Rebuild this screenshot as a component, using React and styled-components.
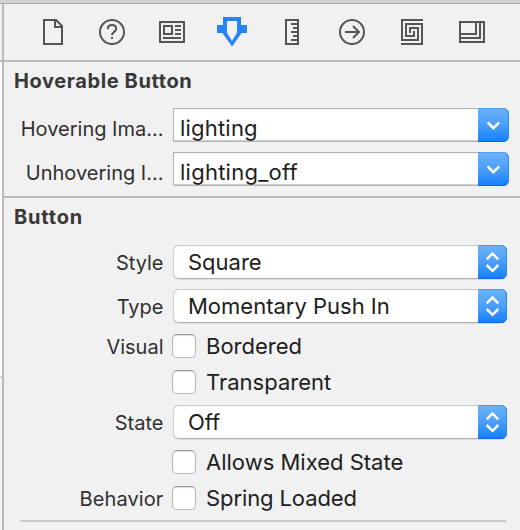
import React from "react";
import styled, { createGlobalStyle } from "styled-components";

const Global = createGlobalStyle`
  * { box-sizing: border-box; }
  body { margin: 0; background: #f1f1f1; font-family: Inter, "Liberation Sans", sans-serif; overflow: hidden; }
`;
const Window = styled.div`
  width: 520px; height: 530px; display: flex; flex-direction: column; background: #f1f1f1;
`;
const TitleEdge = styled.div`
  height: 4px; flex: none; background: #d4d2d5; border-bottom: 1px solid #a8a8aa;
`;
const Body = styled.div`display: flex; flex: 1; min-height: 0;`;
const Canvas = styled.div`width: 2px; display: flex; flex-direction: column;`;
const CanvasPart = styled.div`
  height: ${p => p.$h}px; background: ${p => p.$bg};
  border-bottom: 2px solid ${p => p.$line || "transparent"};
`;
const Inspector = styled.main`flex: 1; border-left: 2px solid #bababa; min-width: 0;`;
const Toolbar = styled.nav`
  height: 58px; padding: 13px 33px 0; display: flex; gap: 28px; border-bottom: 2px solid #bababa;
`;
const Icon = styled.svg`
  width: 32px; height: 32px; flex: none; display: block; fill: none; stroke: #555; stroke-width: 2;
`;
const Section = styled.section`
  height: ${p => p.$h}px; border-bottom: ${p => (p.$last ? "0" : "2px solid #bababa")};
`;
const Heading = styled.h2`
  margin: 0; padding-left: 10px; height: ${p => p.$h}px; line-height: 38px;
  font-size: 20px; font-weight: 700; color: #383838; letter-spacing: ${p => p.$ls}px; white-space: nowrap;
`;
const Row = styled.div`
  height: ${p => p.$h}px; display: flex; align-items: flex-start;
`;
const Label = styled.div`
  width: 159.5px; margin-right: ${p => (p.$check ? 8.5 : 9.5)}px; flex: none; text-align: right;
  font-size: 20px; line-height: ${p => p.$lh || 36}px; color: #303030;
  letter-spacing: ${p => p.$ls}px; white-space: nowrap;
`;
const Value = styled.span`
  flex: 1; font-size: 22px; line-height: ${p => p.$lh || 35}px; color: #202020;
  letter-spacing: ${p => p.$ls}px; white-space: nowrap;
`;
const Combo = styled.div`
  width: 336px; height: 34px; display: flex; background: linear-gradient(#b4b4b4, #b4b4b4) left / 1px 100% no-repeat,
    linear-gradient(#b4b4b4 1px, #ececec 1px, #fff 2px, #fff 32px, #ececec 32px, #b4b4b4 33px);
  border-radius: 0 7px 7px 0; padding-left: 7px;
`;
const Popup = styled.div`
  width: 334px; height: 34px; display: flex; background: #fff; border-radius: 6px; padding-left: 15px;
  box-shadow: inset 0 1px 0 #c9c9c9, inset 1px 0 0 #d0d0d0, inset 0 -1px 0 #adadad, 0 1px 1px #dcdcdc;
`;
const Cap = styled.span`
  width: ${p => p.$w}px; height: 34px; flex: none; display: flex; align-items: center; justify-content: center;
  background: linear-gradient(#6db3f8, #4a9ffb 50%, #157dff);
  border-radius: 0 6px 6px 0;
  box-shadow: inset 0 1px 0 #4c9ff0, inset -1px 0 0 #2e88f5, inset 0 -1px 0 #0a62f2;
`;
const Glyph = styled.svg`fill: none; stroke: #fff; stroke-width: 2.5; display: block;`;
const Box = styled.span`
  width: 24px; height: 24px; flex: none; background: #fff; border: 1px solid #b5b5b5; border-top-color: #999;
  border-radius: 5px; margin-right: 10px; box-shadow: inset 0 1px 1px #ddd;
`;
const Divider = styled.div`height: 2px; margin: 0 14px 0 16px; background: #c9c9c9;`;

const ComboField = ({ label, ls, text, tls, h }) => (
  <Row $h={h}>
    <Label $lh={42} $ls={ls}>{label}</Label>
    <Combo>
      <Value $lh={41} $ls={tls}>{text}</Value>
      <Cap $w={31}><Glyph width="31" height="34"><path d="M9.7 14.3l5.7 5.9 5.8-5.9" /></Glyph></Cap>
    </Combo>
  </Row>
);
const PopupField = ({ label, ls, text, tls, h }) => (
  <Row $h={h}>
    <Label $ls={ls}>{label}</Label>
    <Popup>
      <Value $ls={tls}>{text}</Value>
      <Cap $w={29}><Glyph width="29" height="34"><path d="M8.7 14.3l5.8-5.8 5.8 5.8M8.7 20l5.8 5.8 5.8-5.8" /></Glyph></Cap>
    </Popup>
  </Row>
);
const CheckField = ({ label, ls, text, tls, h }) => (
  <Row $h={h}>
    <Label $check $lh={26} $ls={ls}>{label}</Label>
    <Box />
    <Value $lh={25} $ls={tls}>{text}</Value>
  </Row>
);

export default function App() {
  return (
    <Window>
      <Global />
      <TitleEdge />
      <Body>
        <Canvas>
          <CanvasPart $h={58} $bg="#f1f1f1" $line="#bababa" />
          <CanvasPart $h={316} $bg="#fbfbfb" $line="#d4d4d4" />
          <CanvasPart $h={152} $bg="#f6f6f6" />
        </Canvas>
        <Inspector>
          <Toolbar>
            <Icon viewBox="0 0 32 32"><path d="M7 3h12l6 6v18H7zM18 4v6h7" /></Icon>
            <Icon viewBox="0 0 32 32"><circle cx="15" cy="15" r="12" /><path d="M10.8 12.2c0-2.7 1.7-4.1 4.2-4.1s4.2 1.4 4.2 3.7c0 3.2-4.2 3-4.2 6.4M15 20v2" /></Icon>
            <Icon viewBox="0 0 32 32"><path d="M3 5h24v20H3zM7 9h8v8H7zM18 9h6M18 13h6M18 17h6M6 21h18" /></Icon>
            <Icon viewBox="0 0 32 32"><path d="M0 8h30v8h-5.4L15 29.5 5.4 16H0zM6 0h18v8H6z" fill="#2684f8" stroke="none" /><path d="M10 4h10v11.7L15 24l-5-8.3z" fill="#f1f1f1" stroke="none" /></Icon>
            <Icon viewBox="0 0 32 32"><path d="M9 3h12v24H9zM14 7h7M16 11h5M14 15h7M16 19h5M14 23h7" /></Icon>
            <Icon viewBox="0 0 32 32"><circle cx="15" cy="15" r="12" /><path d="M8 15h14M16 9l6 6-6 6" /></Icon>
            <Icon viewBox="0 0 32 32"><path d="M26 3H5v20h16V11h-8v5M4 27h21V7H9v12h8v-5" /></Icon>
            <Icon viewBox="0 0 32 32"><path d="M3 5h24v20H3zM4 17h15V6M4 21h19V6" /></Icon>
          </Toolbar>
          <Section $h={136}>
            <Heading $h={46} $ls={0.6}>Hoverable Button</Heading>
            <ComboField h={44} label="Hovering Ima..." ls={0} text="lighting" tls={0.2} />
            <ComboField h={44} label="Unhovering I..." ls={0} text="lighting_off" tls={0.25} />
          </Section>
          <Section $h={332} $last>
            <Heading $h={47} $ls={0.8}>Button</Heading>
            <PopupField h={44} label="Style" ls={0} text="Square" tls={0} />
            <PopupField h={45} label="Type" ls={0} text="Momentary Push In" tls={0} />
            <CheckField h={36} label="Visual" ls={0} text="Bordered" tls={0} />
            <CheckField h={35} text="Transparent" tls={0} />
            <PopupField h={45} label="State" ls={0} text="Off" tls={0} />
            <CheckField h={36} text="Allows Mixed State" tls={0} />
            <CheckField h={34} label="Behavior" ls={0.1} text="Spring Loaded" tls={-0.1} />
            <Divider />
          </Section>
        </Inspector>
      </Body>
    </Window>
  );
}
